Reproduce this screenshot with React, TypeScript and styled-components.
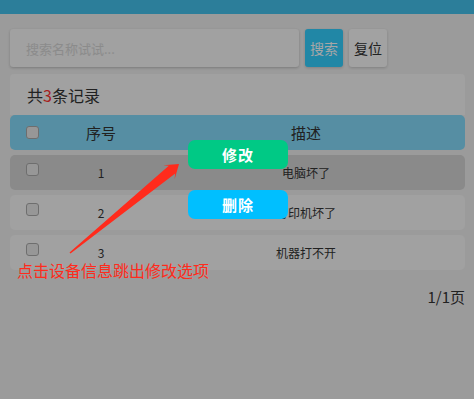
import React from "react";
import styled, { createGlobalStyle } from "styled-components";

const GlobalStyle = createGlobalStyle`
  html, body {
    margin: 0;
    padding: 0;
    background: #efefef;
    font-family: "Noto Sans CJK SC", "DejaVu Sans", sans-serif;
    color: #333;
  }
`;

const Page = styled.div`
  position: relative;
  width: 474px;
  height: 399px;
  overflow: hidden;
`;

const TopBar = styled.div`
  height: 14px;
  background: #44c2ed;
`;

const Content = styled.div`
  padding: 15px 9px 0 10px;
`;

const SearchRow = styled.div`
  display: flex;
  gap: 6px;
  height: 38px;
`;

const SearchBox = styled.div`
  width: 289px;
  display: flex;
  align-items: center;
  padding-left: 16px;
  box-sizing: border-box;
  background: #f7f7f7;
  border-radius: 3px;
  box-shadow: 0 1px 3px rgba(0, 0, 0, 0.22);
  font-size: 13px;
  color: #d6d6d6;
`;

const ActionButton = styled.div<{ $primary?: boolean }>`
  width: 38px;
  display: flex;
  align-items: center;
  justify-content: center;
  border-radius: 3px;
  font-size: 14px;
  background: ${({ $primary }) => ($primary ? "#33cfff" : "#f9f9f9")};
  color: ${({ $primary }) => ($primary ? "#ffffff" : "#333")};
  box-shadow: 0 1px 3px rgba(0, 0, 0, 0.18);
`;

const CountCard = styled.div`
  margin-top: 7px;
  height: 41px;
  display: flex;
  align-items: center;
  padding-left: 17px;
  background: #f7f7f7;
  border-radius: 4px 4px 0 0;
  font-size: 16px;
  color: #333;
`;

const Accent = styled.span`
  color: #ff3333;
`;

const Table = styled.div`
  display: flex;
  flex-direction: column;
  gap: 5px;
`;

const Row = styled.div<{ $variant?: "head" | "active" | "plain" }>`
  display: grid;
  grid-template-columns: 40px 102px 1fr;
  padding-right: 5px;
  height: 35px;
  border-radius: 5px;
  align-items: center;
  background: ${({ $variant }) =>
    $variant === "head" ? "#84dbfa" : $variant === "active" ? "#d4d4d4" : "#f7f7f7"};
  font-size: ${({ $variant }) => ($variant === "head" ? "15px" : "12px")};
  color: #333;
`;

const CheckCell = styled.div<{ $top?: boolean }>`
  padding-left: 16px;
  align-self: ${({ $top }) => ($top ? "start" : "center")};
  padding-top: ${({ $top }) => ($top ? "8px" : "0")};
  display: flex;
`;

const Check = styled.span`
  width: 11px;
  height: 11px;
  border: 1px solid #a9a9a9;
  border-radius: 3px;
  background: #e9e9e9;
`;

const Cell = styled.div`
  text-align: center;
  white-space: nowrap;
`;

const Pager = styled.div`
  margin-top: 17px;
  text-align: right;
  font-size: 15px;
  line-height: 20px;
  color: #333;
`;

const Backdrop = styled.div`
  position: absolute;
  inset: 0;
  background: rgba(0, 0, 0, 0.35);
`;

const PopMenu = styled.div`
  position: absolute;
  left: 188px;
  top: 140px;
  width: 100px;
  display: flex;
  flex-direction: column;
  gap: 21px;
`;

const PopButton = styled.div<{ $color: string }>`
  height: 29px;
  border-radius: 7px;
  background: ${({ $color }) => $color};
  color: #fff;
  font-weight: 700;
  font-size: 15px;
  display: flex;
  align-items: center;
  justify-content: center;
  letter-spacing: 1px;
`;

const ArrowLayer = styled.svg`
  position: absolute;
  left: 0;
  top: 0;
  pointer-events: none;
`;

const Note = styled.div`
  position: absolute;
  left: 17px;
  top: 259px;
  font-size: 16px;
  line-height: 22px;
  color: #ff2b1c;
  white-space: nowrap;
`;

const rows = [
  { id: 1, text: "电脑坏了" },
  { id: 2, text: "打印机坏了" },
  { id: 3, text: "机器打不开" },
];

export default function App() {
  return (
    <Page>
      <GlobalStyle />
      <TopBar />
      <Content>
        <SearchRow>
          <SearchBox>搜索名称试试...</SearchBox>
          <ActionButton $primary>搜索</ActionButton>
          <ActionButton>复位</ActionButton>
        </SearchRow>
        <CountCard>
          共<Accent>3</Accent>条记录
        </CountCard>
        <Table>
          <Row $variant="head">
            <CheckCell>
              <Check />
            </CheckCell>
            <Cell>序号</Cell>
            <Cell>描述</Cell>
          </Row>
          {rows.map((r, i) => (
            <Row key={r.id} $variant={i === 0 ? "active" : "plain"}>
              <CheckCell $top>
                <Check />
              </CheckCell>
              <Cell>{r.id}</Cell>
              <Cell>{r.text}</Cell>
            </Row>
          ))}
        </Table>
        <Pager>1/1页</Pager>
      </Content>
      <Backdrop />
      <PopMenu>
        <PopButton $color="#00c985">修改</PopButton>
        <PopButton $color="#00bfff">删除</PopButton>
      </PopMenu>
      <ArrowLayer width="474" height="399" viewBox="0 0 474 399">
        <polygon
          fill="#ff2b1c"
          points="69.5,252.4 168.8,165.8 163.3,165.2 179,164 174.6,179.2 175.2,173.6 70.5,253.6"
        />
      </ArrowLayer>
      <Note>点击设备信息跳出修改选项</Note>
    </Page>
  );
}
